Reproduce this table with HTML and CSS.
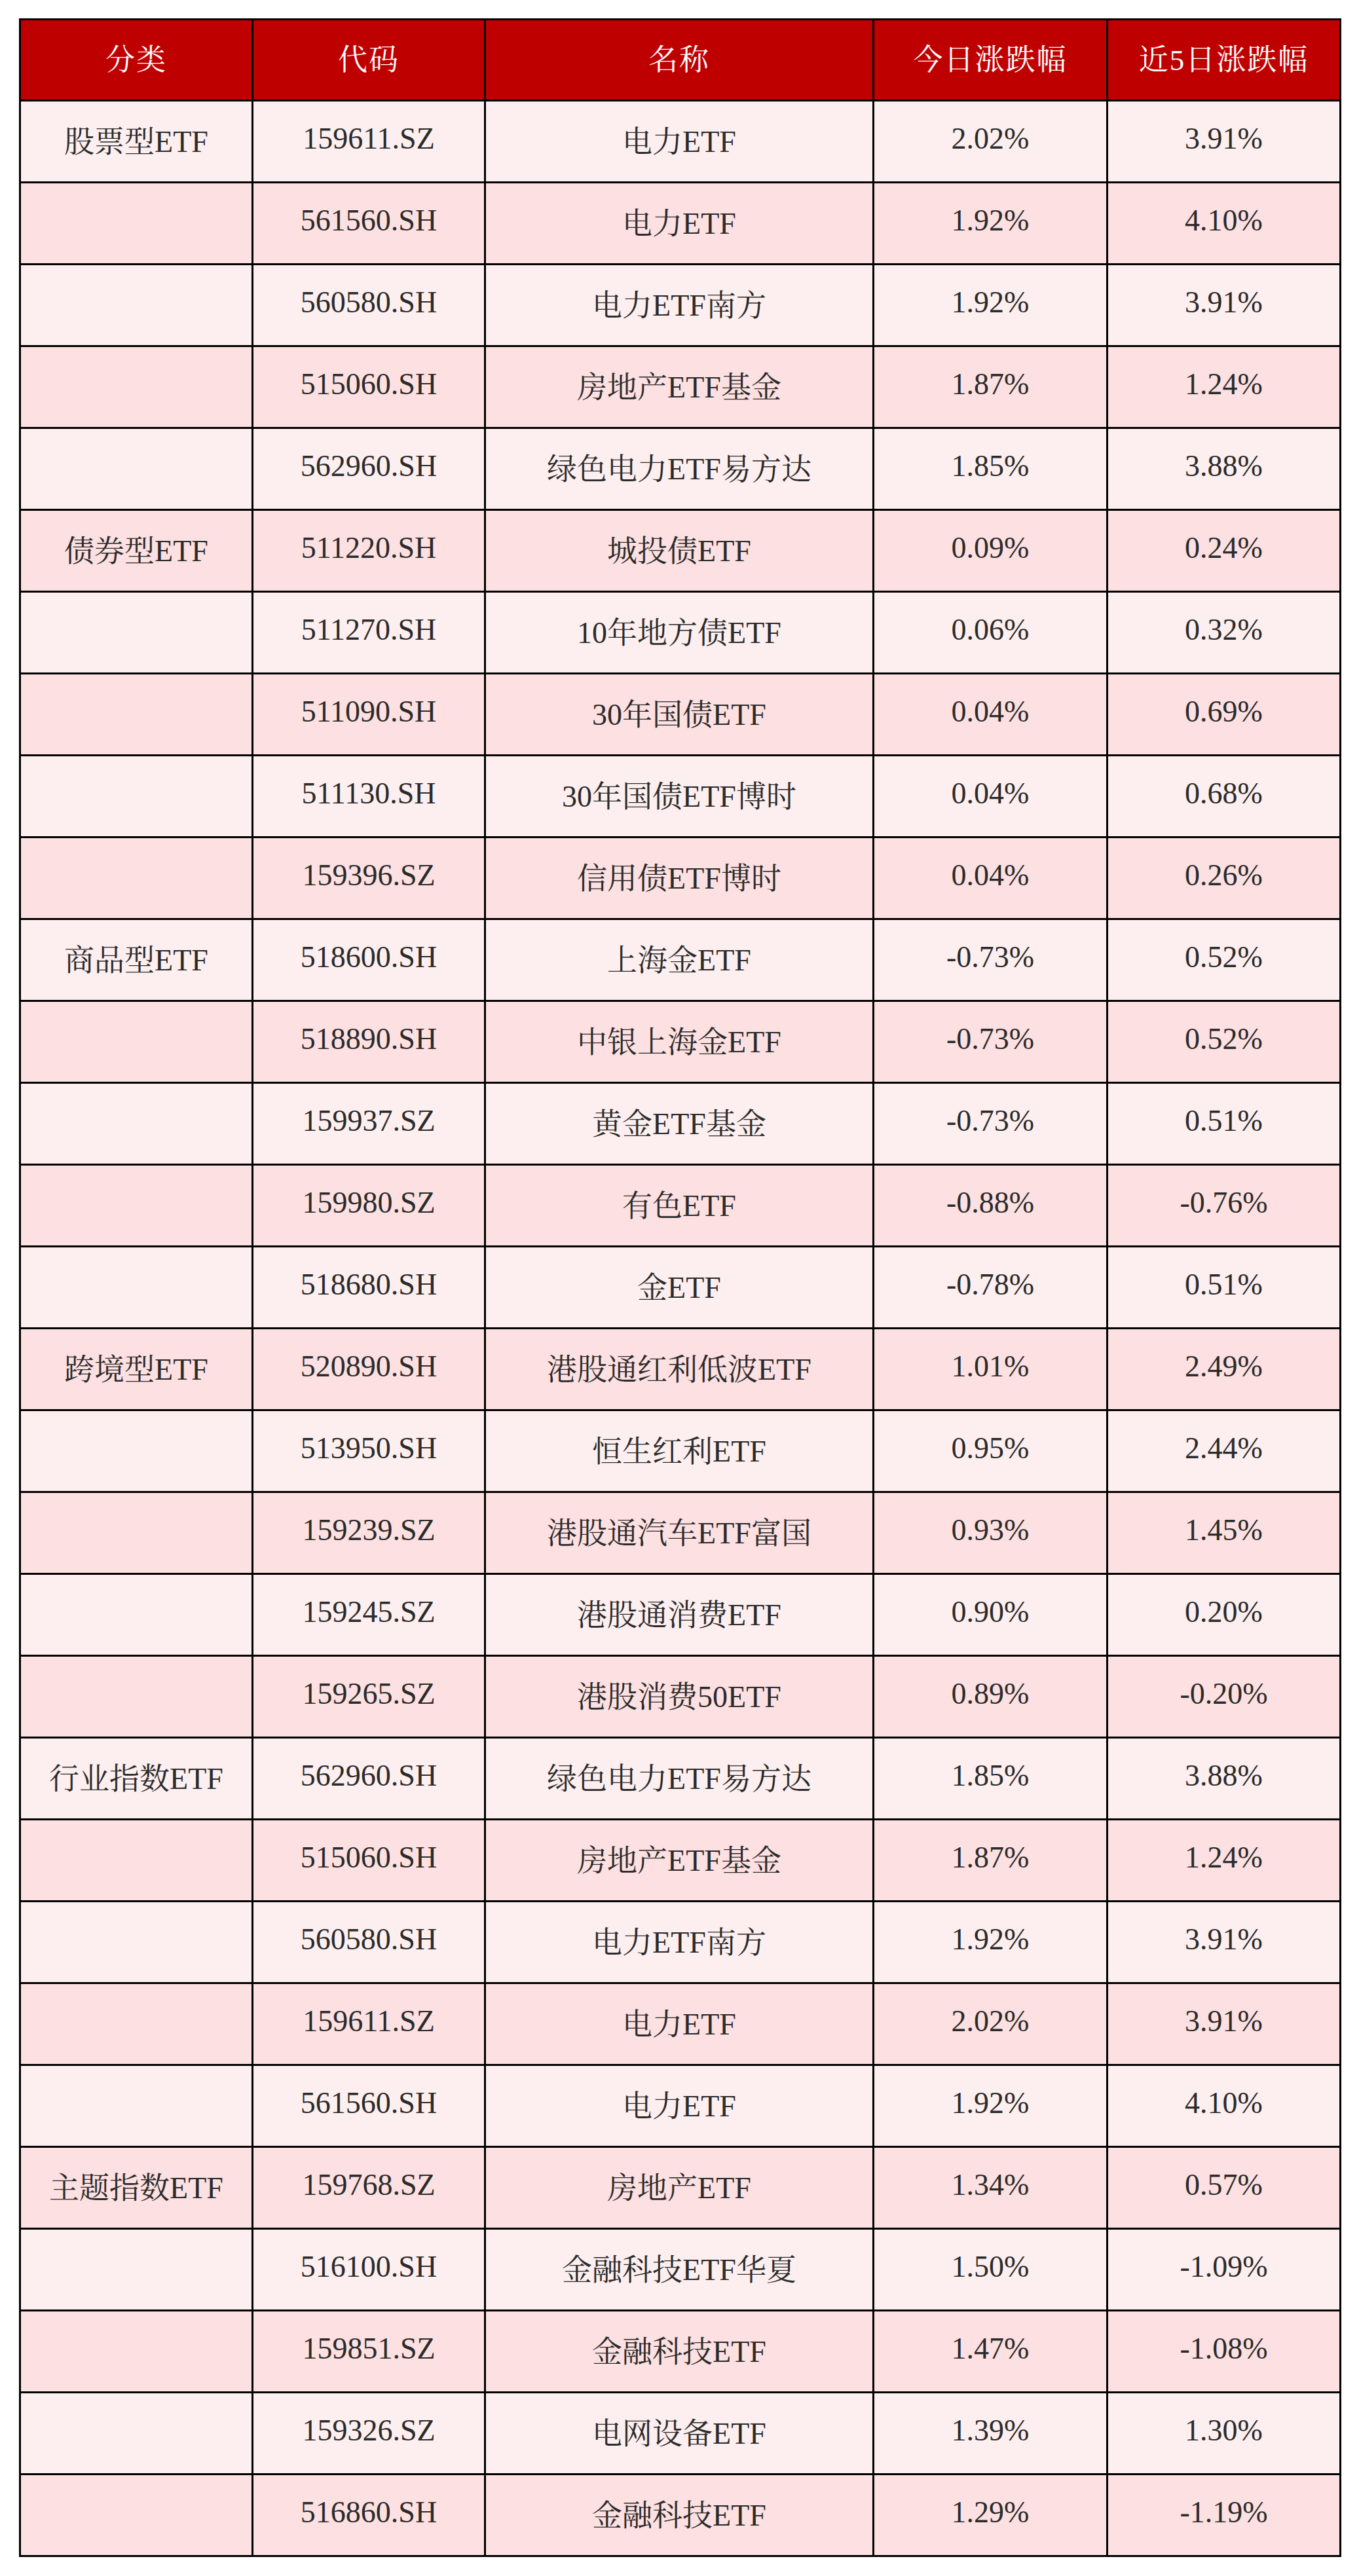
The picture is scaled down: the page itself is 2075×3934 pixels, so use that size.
FILE: index.html
```html
<!DOCTYPE html>
<html lang="zh-CN">
<head>
<meta charset="utf-8">
<title>ETF涨跌幅</title>
<link rel="stylesheet" href="styles.css">
</head>
<body>
<div class="page">
  <div class="grid">
    <div class="cell head">分类</div><div class="cell head">代码</div><div class="cell head">名称</div><div class="cell head">今日涨跌幅</div><div class="cell head">近5日涨跌幅</div>

    <div class="cell odd">股票型ETF</div><div class="cell odd">159611.SZ</div><div class="cell odd">电力ETF</div><div class="cell odd">2.02%</div><div class="cell odd">3.91%</div>
    <div class="cell even"></div><div class="cell even">561560.SH</div><div class="cell even">电力ETF</div><div class="cell even">1.92%</div><div class="cell even">4.10%</div>
    <div class="cell odd"></div><div class="cell odd">560580.SH</div><div class="cell odd">电力ETF南方</div><div class="cell odd">1.92%</div><div class="cell odd">3.91%</div>
    <div class="cell even"></div><div class="cell even">515060.SH</div><div class="cell even">房地产ETF基金</div><div class="cell even">1.87%</div><div class="cell even">1.24%</div>
    <div class="cell odd"></div><div class="cell odd">562960.SH</div><div class="cell odd">绿色电力ETF易方达</div><div class="cell odd">1.85%</div><div class="cell odd">3.88%</div>

    <div class="cell even">债券型ETF</div><div class="cell even">511220.SH</div><div class="cell even">城投债ETF</div><div class="cell even">0.09%</div><div class="cell even">0.24%</div>
    <div class="cell odd"></div><div class="cell odd">511270.SH</div><div class="cell odd">10年地方债ETF</div><div class="cell odd">0.06%</div><div class="cell odd">0.32%</div>
    <div class="cell even"></div><div class="cell even">511090.SH</div><div class="cell even">30年国债ETF</div><div class="cell even">0.04%</div><div class="cell even">0.69%</div>
    <div class="cell odd"></div><div class="cell odd">511130.SH</div><div class="cell odd">30年国债ETF博时</div><div class="cell odd">0.04%</div><div class="cell odd">0.68%</div>
    <div class="cell even"></div><div class="cell even">159396.SZ</div><div class="cell even">信用债ETF博时</div><div class="cell even">0.04%</div><div class="cell even">0.26%</div>

    <div class="cell odd">商品型ETF</div><div class="cell odd">518600.SH</div><div class="cell odd">上海金ETF</div><div class="cell odd">-0.73%</div><div class="cell odd">0.52%</div>
    <div class="cell even"></div><div class="cell even">518890.SH</div><div class="cell even">中银上海金ETF</div><div class="cell even">-0.73%</div><div class="cell even">0.52%</div>
    <div class="cell odd"></div><div class="cell odd">159937.SZ</div><div class="cell odd">黄金ETF基金</div><div class="cell odd">-0.73%</div><div class="cell odd">0.51%</div>
    <div class="cell even"></div><div class="cell even">159980.SZ</div><div class="cell even">有色ETF</div><div class="cell even">-0.88%</div><div class="cell even">-0.76%</div>
    <div class="cell odd"></div><div class="cell odd">518680.SH</div><div class="cell odd">金ETF</div><div class="cell odd">-0.78%</div><div class="cell odd">0.51%</div>

    <div class="cell even">跨境型ETF</div><div class="cell even">520890.SH</div><div class="cell even">港股通红利低波ETF</div><div class="cell even">1.01%</div><div class="cell even">2.49%</div>
    <div class="cell odd"></div><div class="cell odd">513950.SH</div><div class="cell odd">恒生红利ETF</div><div class="cell odd">0.95%</div><div class="cell odd">2.44%</div>
    <div class="cell even"></div><div class="cell even">159239.SZ</div><div class="cell even">港股通汽车ETF富国</div><div class="cell even">0.93%</div><div class="cell even">1.45%</div>
    <div class="cell odd"></div><div class="cell odd">159245.SZ</div><div class="cell odd">港股通消费ETF</div><div class="cell odd">0.90%</div><div class="cell odd">0.20%</div>
    <div class="cell even"></div><div class="cell even">159265.SZ</div><div class="cell even">港股消费50ETF</div><div class="cell even">0.89%</div><div class="cell even">-0.20%</div>

    <div class="cell odd">行业指数ETF</div><div class="cell odd">562960.SH</div><div class="cell odd">绿色电力ETF易方达</div><div class="cell odd">1.85%</div><div class="cell odd">3.88%</div>
    <div class="cell even"></div><div class="cell even">515060.SH</div><div class="cell even">房地产ETF基金</div><div class="cell even">1.87%</div><div class="cell even">1.24%</div>
    <div class="cell odd"></div><div class="cell odd">560580.SH</div><div class="cell odd">电力ETF南方</div><div class="cell odd">1.92%</div><div class="cell odd">3.91%</div>
    <div class="cell even"></div><div class="cell even">159611.SZ</div><div class="cell even">电力ETF</div><div class="cell even">2.02%</div><div class="cell even">3.91%</div>
    <div class="cell odd"></div><div class="cell odd">561560.SH</div><div class="cell odd">电力ETF</div><div class="cell odd">1.92%</div><div class="cell odd">4.10%</div>

    <div class="cell even">主题指数ETF</div><div class="cell even">159768.SZ</div><div class="cell even">房地产ETF</div><div class="cell even">1.34%</div><div class="cell even">0.57%</div>
    <div class="cell odd"></div><div class="cell odd">516100.SH</div><div class="cell odd">金融科技ETF华夏</div><div class="cell odd">1.50%</div><div class="cell odd">-1.09%</div>
    <div class="cell even"></div><div class="cell even">159851.SZ</div><div class="cell even">金融科技ETF</div><div class="cell even">1.47%</div><div class="cell even">-1.08%</div>
    <div class="cell odd"></div><div class="cell odd">159326.SZ</div><div class="cell odd">电网设备ETF</div><div class="cell odd">1.39%</div><div class="cell odd">1.30%</div>
    <div class="cell even"></div><div class="cell even">516860.SH</div><div class="cell even">金融科技ETF</div><div class="cell even">1.29%</div><div class="cell even">-1.19%</div>
  </div>
</div>
</body>
</html>
```

FILE: styles.css
```css
html, body {
  margin: 0;
  padding: 0;
  background: #ffffff;
}

.page {
  padding: 28px 0 0 29px;
}

.grid {
  display: grid;
  grid-template-columns: 355px 355px 593px 357px 356px;
  grid-template-rows: 124px;
  grid-auto-rows: 125px;
  width: max-content;
  border-left: 3px solid #000;
  border-top: 3px solid #000;
  font-family: "Liberation Serif", "Noto Serif CJK SC", "Noto Sans CJK SC", serif;
  font-size: 46px;
  color: #2b2b2b;
}

.cell {
  box-sizing: border-box;
  border-right: 3px solid #000;
  border-bottom: 3px solid #000;
  display: flex;
  align-items: center;
  justify-content: center;
  white-space: nowrap;
  padding-bottom: 9px;
}

.head {
  background: #bf0000;
  color: #ffffff;
  font-size: 45px;
  letter-spacing: 2px;
}

.odd {
  background: #fdefef;
}

.even {
  background: #fde0e1;
}
```
